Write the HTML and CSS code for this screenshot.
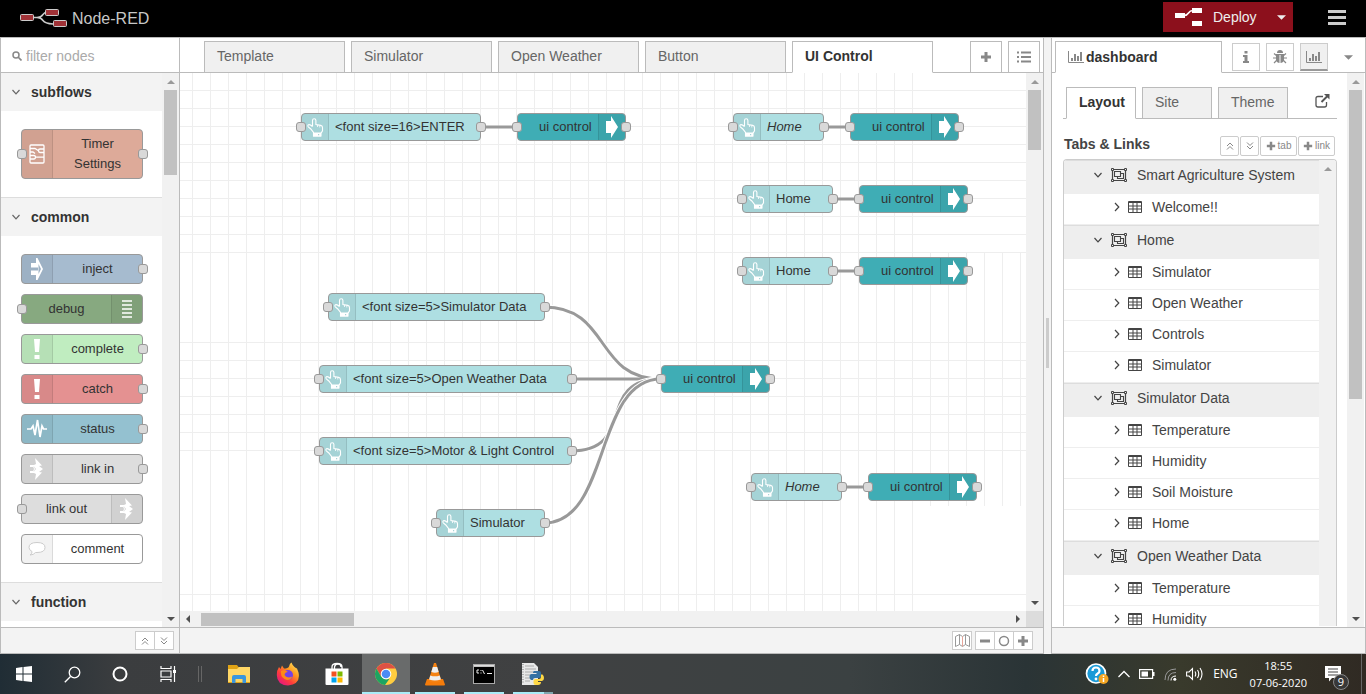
FILE: index.html
```html
<!DOCTYPE html>
<html lang="en">
<head>
<meta charset="utf-8">
<title>Node-RED</title>
<link rel="stylesheet" href="styles.css">
</head>
<body>
<svg class="defs" width="0" height="0" aria-hidden="true">
  <symbol id="i-hand" viewBox="0 0 17 19"><path d="M5.500 8.500V2.500q0-1.800 1.700-1.800T8.900 2.500V6.500l4.800.9q1.900.4 1.800 2.400v3l-1.600 2.700V18H6.500v-3.500L3.800 11 1.300 8.800Q.3 7.500 1.500 6.700q1.500-.6 4 1.800" fill="none" stroke="#fff" stroke-width="1.100"/><path d="M6 14.500h8.200v4H6z" fill="#fff"/><path d="M11 16h1.200v1.200H11z" fill="#a7d4d7"/><path d="M10.500 7v2M12.800 7.500v2" stroke="#fff" stroke-width=".8"/></symbol>
  <symbol id="i-arrow" viewBox="0 0 12 22"><path d="M0 5h5V0L12 11 5 22v-5H0z" fill="#fff"/></symbol>
  <symbol id="i-down" viewBox="0 0 10 10"><path d="M1.500 3 5 6.800 8.500 3" fill="none" stroke="currentColor" stroke-width="1.200"/></symbol>
  <symbol id="i-right" viewBox="0 0 10 10"><path d="M3 1 6.800 5 3 9" fill="none" stroke="currentColor" stroke-width="1.200"/></symbol>
  <symbol id="i-up2" viewBox="0 0 10 10"><path d="M2 5l3-3 3 3M2 8.500l3-3 3 3" fill="none" stroke="currentColor"/></symbol>
  <symbol id="i-down2" viewBox="0 0 10 10"><path d="M2 1.500l3 3 3-3M2 5l3 3 3-3" fill="none" stroke="currentColor"/></symbol>
  <symbol id="i-plus" viewBox="0 0 12 12"><path d="M6 1v10M1 6h10" stroke="currentColor" stroke-width="3"/></symbol>
  <symbol id="i-group" viewBox="0 0 16 14"><g fill="none" stroke="currentColor"><path d="M1.500 1.500h13v11h-13z" stroke-width="1.200"/><path d="M3.500 3.500h6v5h-6zM9.500 5.500h3v5H6.500v-2" stroke-width="1.100"/></g><g fill="#eee" stroke="currentColor"><path d="M.5.500h2v2h-2zM13.500.500h2v2h-2zM.5 11.500h2v2h-2zM13.500 11.500h2v2h-2z"/></g></symbol>
  <symbol id="i-table" viewBox="0 0 14 12"><path d="M1 0h12q1 0 1 1v10q0 1-1 1H1q-1 0-1-1V1q0-1 1-1z" fill="#444"/><path d="M1 2h3.500v2.500H1zM5.500 2h3v2.500h-3zM9.500 2H13v2.500H9.500zM1 5.500h3.500v2H1zM5.500 5.500h3v2h-3zM9.500 5.500H13v2H9.500zM1 8.500h3.500V11H1zM5.500 8.500h3V11h-3zM9.500 8.500H13V11H9.500z" fill="#fff"/></symbol>
  <symbol id="i-chart" viewBox="0 0 16 12"><path d="M.5 0v11.500H16" fill="none" stroke="currentColor"/><path d="M3 7h2v3H3zM6 3h2v7H6zM9 5h2v5H9zM12 1h2v9h-2z" fill="currentColor"/></symbol>
  <symbol id="i-caret-up" viewBox="0 0 8 4"><path d="M0 4 4 0l4 4z" fill="currentColor"/></symbol>
  <symbol id="i-caret-down" viewBox="0 0 8 4"><path d="M0 0h8L4 4z" fill="currentColor"/></symbol>
  <symbol id="i-bang" viewBox="0 0 8 22"><path d="M1 1h6l-1 13H2zM1.500 17h5v4h-5z" fill="#fff"/></symbol>
  <symbol id="i-link" viewBox="0 0 14 22"><path d="M5 0l7 7.500-3 .5 4 3-4 3 3 .5L5 22l1-6-2-1H0v-1.500h4L6 11 4 8.500H0V7h4l2-1z" fill="#fff"/><path d="M0 8.500h3.500q2 2.500 0 5H0" fill="none" stroke="#fff"/></symbol>
</svg>

<header class="topbar">
  <div class="brand">
    <svg width="47" height="19" viewBox="0 0 47 19"><path d="M13 8.500h4q4 0 6-3t5-2M13 8.500h4q4 0 6 3t10 3.500" fill="none" stroke="#ccc" stroke-width="1.500"/><g fill="#a03237" stroke="#ccc"><rect x=".5" y="5.500" width="13" height="6" rx="1"/><rect x="25.500" y=".5" width="13" height="6" rx="1"/><rect x="33.500" y="11.500" width="13" height="6" rx="1"/></g></svg>
    <span>Node-RED</span>
  </div>
  <div class="topbar-actions">
    <button class="deploy"><svg width="28" height="18" viewBox="0 0 28 18"><path d="M0 5h10v5H0zM17 0h10v5H17zM17 13h10v5H17z" fill="#fff"/><path d="M9 7.500q3 0 4.500-2.500T18 2.500" fill="none" stroke="#fff" stroke-width="1.500"/></svg><span>Deploy</span><svg class="deploy-caret" width="9" height="5"><use href="#i-caret-down"/></svg></button>
    <button class="menu" aria-label="Menu"><svg width="18" height="15"><path d="M0 1.500h18M0 7.500h18M0 13.500h18" stroke="#ccc" stroke-width="3"/></svg></button>
  </div>
</header>

<main class="editor">
  <aside class="palette">
    <label class="search"><svg width="10" height="10" viewBox="0 0 10 10"><circle cx="4" cy="4" r="3" fill="none" stroke="#888" stroke-width="1.500"/><path d="M6 6l3.500 3.500" stroke="#888" stroke-width="1.700"/></svg><input type="text" placeholder="filter nodes" aria-label="filter nodes"></label>
    <div class="pane">
      <div class="categories">
        <section>
          <h2><svg width="10" height="10"><use href="#i-down"/></svg>subflows</h2>
          <div class="nodes">
            <div class="pnode subflow both"><i class="port in"></i><b class="ic"><svg width="16" height="20" viewBox="0 0 16 20"><g fill="none" stroke="#fff" stroke-width="1.300"><rect x="1" y="1" width="14" height="18" rx="1"/><path d="M15 5h-4q-1.500 0-1.500 1.700T11 8.500h4M1 11.500h4q1.500 0 1.500 1.700T5 15H1M1 4.500h5l3.500 2.200M6.500 13.200H15M1 8h3l2 1.500"/></g></svg></b><span>Timer<br>Settings</span><i class="port out"></i></div>
          </div>
        </section>
        <section>
          <h2><svg width="10" height="10"><use href="#i-down"/></svg>common</h2>
          <div class="nodes">
            <div class="pnode inject"><b class="ic"><svg width="14" height="22" viewBox="0 0 14 22"><path d="M1 5h5V0h1.500L13 11 7.500 22H6v-5H1v-4.500h7v-3H1z" fill="#fff"/><path d="M8.500 6l2.500 5-2.500 5z" fill="#9db1c4"/></svg></b><span>inject</span><i class="port out"></i></div>
            <div class="pnode debug"><i class="port in"></i><span>debug</span><b class="ic r"><svg width="10" height="18"><path d="M0 1h10M0 5h10M0 9h10M0 13h10M0 17h10" stroke="#fff" stroke-width="1.500"/></svg></b></div>
            <div class="pnode complete"><b class="ic"><svg width="8" height="22"><use href="#i-bang"/></svg></b><span>complete</span><i class="port out"></i></div>
            <div class="pnode catch"><b class="ic"><svg width="8" height="22"><use href="#i-bang"/></svg></b><span>catch</span><i class="port out"></i></div>
            <div class="pnode status"><b class="ic"><svg width="20" height="24" viewBox="0 0 20 24"><path d="M0 12h4l2-3 2 9 2.500-15L13 20l2-11 1.500 3H20" fill="none" stroke="#fff" stroke-width="1.700"/></svg></b><span>status</span><i class="port out"></i></div>
            <div class="pnode link"><b class="ic"><svg width="14" height="22"><use href="#i-link"/></svg></b><span>link in</span><i class="port out"></i></div>
            <div class="pnode link"><i class="port in"></i><span>link out</span><b class="ic r"><svg width="14" height="22"><use href="#i-link"/></svg></b></div>
            <div class="pnode comment"><b class="ic"><svg width="18" height="16" viewBox="0 0 18 16"><path d="M4 10.500Q1 9 1 6.500 1 1.500 9 1.500t8 5q0 5-8 5H7.500Q5.500 14 2 14q2.500-1.500 2-3.500z" fill="#fff" stroke="#ccc"/></svg></b><span>comment</span></div>
          </div>
        </section>
        <section>
          <h2><svg width="10" height="10"><use href="#i-down"/></svg>function</h2>
        </section>
      </div>
      <div class="vbar"><svg class="dim" width="8" height="4"><use href="#i-caret-up"/></svg><div class="thumb t-palette"></div><svg class="end" width="8" height="4"><use href="#i-caret-down"/></svg></div>
    </div>
    <footer class="foot foot-palette"><div class="btns"><button aria-label="Collapse all"><svg width="10" height="10"><use href="#i-up2"/></svg></button><button aria-label="Expand all"><svg width="10" height="10"><use href="#i-down2"/></svg></button></div></footer>
  </aside>

  <section class="workspace">
    <nav class="tabs">
      <a class="tab" href="#">Template</a><a class="tab" href="#">Simulator</a><a class="tab" href="#">Open Weather</a><a class="tab" href="#">Button</a><a class="tab on" href="#">UI Control</a>
      <div class="tab-tools"><button aria-label="Add flow"><svg width="12" height="12"><use href="#i-plus"/></svg></button><button aria-label="List flows"><svg width="14" height="12"><path d="M0 1.500h2M0 6h2M0 10.500h2M4 1.500h10M4 6h10M4 10.500h10" stroke="#888" stroke-width="2"/></svg></button></div>
    </nav>
    <div class="pane">
      <div class="canvas-col">
        <div class="canvas">
          <svg class="wires">
            <defs>
              <pattern id="gv" x="12" width="18" height="18" patternUnits="userSpaceOnUse"><rect width="1" height="18" fill="#eee"/></pattern>
              <pattern id="gh" y="17" width="18" height="18" patternUnits="userSpaceOnUse"><rect width="18" height="1" fill="#eee"/></pattern>
            </defs>
            <rect width="733" height="100%" fill="url(#gv)"/>
            <rect x="733" y="180" width="112" height="253" fill="url(#gv)"/>
            <rect width="100%" height="180" fill="url(#gh)"/>
            <rect y="269" width="100%" height="109" fill="url(#gh)"/>
            <rect y="521" width="100%" height="1" fill="#eee"/>
            <g fill="none">
              <path class="halo" d="M364 234C431 234 414 306 481 306"/><path class="wire" d="M364 234C431 234 414 306 481 306"/>
              <path class="wire" d="M391 306H481"/>
              <path class="halo" d="M391 378C458 378 414 306 481 306"/><path class="wire" d="M391 378C458 378 414 306 481 306"/>
              <path class="halo" d="M364 450C431 450 414 306 481 306"/><path class="wire" d="M364 450C431 450 414 306 481 306"/>
              <path class="wire" d="M301 54H337M643 54H670M652 126H679M652 198H679M661 414H688"/>
            </g>
          </svg>
          <div class="node btn enter"><i class="port in"></i><b class="ic"><svg width="17" height="19"><use href="#i-hand"/></svg></b><span>&lt;font size=16&gt;ENTER</span><i class="port out"></i></div>
          <div class="node ctl enter-ctl"><i class="port in"></i><span>ui control</span><b class="ic r"><svg width="12" height="22"><use href="#i-arrow"/></svg></b><i class="port out"></i></div>
          <div class="node btn home1"><i class="port in"></i><b class="ic"><svg width="17" height="19"><use href="#i-hand"/></svg></b><span><em>Home</em></span><i class="port out"></i></div>
          <div class="node ctl home1-ctl"><i class="port in"></i><span>ui control</span><b class="ic r"><svg width="12" height="22"><use href="#i-arrow"/></svg></b><i class="port out"></i></div>
          <div class="node btn home2"><i class="port in"></i><b class="ic"><svg width="17" height="19"><use href="#i-hand"/></svg></b><span>Home</span><i class="port out"></i></div>
          <div class="node ctl home2-ctl"><i class="port in"></i><span>ui control</span><b class="ic r"><svg width="12" height="22"><use href="#i-arrow"/></svg></b><i class="port out"></i></div>
          <div class="node btn home3"><i class="port in"></i><b class="ic"><svg width="17" height="19"><use href="#i-hand"/></svg></b><span>Home</span><i class="port out"></i></div>
          <div class="node ctl home3-ctl"><i class="port in"></i><span>ui control</span><b class="ic r"><svg width="12" height="22"><use href="#i-arrow"/></svg></b><i class="port out"></i></div>
          <div class="node btn simdata"><i class="port in"></i><b class="ic"><svg width="17" height="19"><use href="#i-hand"/></svg></b><span>&lt;font size=5&gt;Simulator Data</span><i class="port out"></i></div>
          <div class="node btn weather"><i class="port in"></i><b class="ic"><svg width="17" height="19"><use href="#i-hand"/></svg></b><span>&lt;font size=5&gt;Open Weather Data</span><i class="port out"></i></div>
          <div class="node btn motor"><i class="port in"></i><b class="ic"><svg width="17" height="19"><use href="#i-hand"/></svg></b><span>&lt;font size=5&gt;Motor &amp; Light Control</span><i class="port out"></i></div>
          <div class="node btn simulator"><i class="port in"></i><b class="ic"><svg width="17" height="19"><use href="#i-hand"/></svg></b><span>Simulator</span><i class="port out"></i></div>
          <div class="node ctl main-ctl"><i class="port in"></i><span>ui control</span><b class="ic r"><svg width="12" height="22"><use href="#i-arrow"/></svg></b><i class="port out"></i></div>
          <div class="node btn home4"><i class="port in"></i><b class="ic"><svg width="17" height="19"><use href="#i-hand"/></svg></b><span><em>Home</em></span><i class="port out"></i></div>
          <div class="node ctl home4-ctl"><i class="port in"></i><span>ui control</span><b class="ic r"><svg width="12" height="22"><use href="#i-arrow"/></svg></b><i class="port out"></i></div>
        </div>
        <div class="hbar"><svg width="4" height="8"><path d="M4 0v8L0 4z" fill="#505050"/></svg><div class="hthumb"></div><svg class="hend" width="4" height="8"><path d="M0 0v8l4-4z" fill="#505050"/></svg></div>
      </div>
      <div class="vcol">
        <div class="vbar"><svg class="dim" width="8" height="4"><use href="#i-caret-up"/></svg><div class="thumb t-canvas"></div><svg class="end" width="8" height="4"><use href="#i-caret-down"/></svg></div>
        <div class="corner"></div>
      </div>
    </div>
    <footer class="foot">
      <div class="btns"><button aria-label="Toggle navigator"><svg width="15" height="13" viewBox="0 0 15 13"><path d="M.5 2.500 4.500.500l3 2 3-2 4 2v10l-4-2-3 2-3-2-4 2zM4.500.500v10M10.500.500v10" fill="none" stroke="#999"/><path d="M7.500 2.500v10" stroke="#e8a59a"/></svg></button></div>
      <div class="btns"><button aria-label="Zoom out"><svg width="12" height="12"><path d="M1 6h10" stroke="#888" stroke-width="3"/></svg></button><button aria-label="Reset zoom"><svg width="12" height="12"><circle cx="6" cy="6" r="4.500" fill="none" stroke="#888" stroke-width="1.500"/></svg></button><button aria-label="Zoom in"><svg width="12" height="12"><use href="#i-plus"/></svg></button></div>
    </footer>
  </section>

  <div class="splitter"><div class="grip"></div></div>

  <aside class="sidebar">
    <nav class="tabs side-tabs">
      <a class="tab on" href="#"><svg width="16" height="12"><use href="#i-chart"/></svg>dashboard</a>
      <div class="side-tools">
        <button aria-label="Info"><svg width="6" height="12" viewBox="0 0 6 12"><path d="M1.500 0h3v2.500h-3zM0 4h4.500v6H6v2H0v-2h1.500V6H0z" fill="#888"/></svg></button>
        <button aria-label="Debug"><svg width="14" height="14" viewBox="0 0 14 14"><g fill="#888"><path d="M4 3q0-3 3-3t3 3z"/><path d="M3 4h8v5q0 4-4 4T3 9z"/></g><path d="M1 3.500 4 6M13 3.500 10 6M0 8h14M1 13l3-3M13 13l-3-3" stroke="#888" stroke-width="1.200"/><path d="M7 5v8" stroke="#fff"/></svg></button>
        <button class="sel" aria-label="Dashboard"><svg width="16" height="12"><use href="#i-chart"/></svg></button>
        <button class="plain" aria-label="More"><svg width="9" height="5"><use href="#i-caret-down"/></svg></button>
      </div>
    </nav>
    <div class="pane side-pane">
      <div class="side-body">
        <nav class="subtabs"><a class="tab on" href="#">Layout</a><a class="tab" href="#">Site</a><a class="tab" href="#">Theme</a><a class="ext" href="#" aria-label="Open dashboard"><svg width="15" height="14" viewBox="0 0 15 14"><path d="M8 2.500H3q-2 0-2 2V11q0 2 2 2h6.500q2 0 2-2V8" fill="none" stroke="#555" stroke-width="1.300"/><path d="M9 0h5.500v5.500z" fill="#555"/><path d="M6.500 8 13 1.500" stroke="#555" stroke-width="2"/></svg></a></nav>
        <div class="list-head"><h3>Tabs &amp; Links</h3><div class="mini"><button aria-label="Collapse"><svg width="10" height="10"><use href="#i-up2"/></svg></button><button aria-label="Expand"><svg width="10" height="10"><use href="#i-down2"/></svg></button><button class="wide"><svg width="10" height="10"><use href="#i-plus"/></svg>tab</button><button class="wide"><svg width="10" height="10"><use href="#i-plus"/></svg>link</button></div></div>
        <div class="tree">
          <ul>
            <li class="head"><svg width="10" height="10"><use href="#i-down"/></svg><svg width="16" height="14"><use href="#i-group"/></svg>Smart Agriculture System</li>
            <li><svg width="10" height="10"><use href="#i-right"/></svg><svg width="14" height="12"><use href="#i-table"/></svg>Welcome!!</li>
            <li class="head"><svg width="10" height="10"><use href="#i-down"/></svg><svg width="16" height="14"><use href="#i-group"/></svg>Home</li>
            <li><svg width="10" height="10"><use href="#i-right"/></svg><svg width="14" height="12"><use href="#i-table"/></svg>Simulator</li>
            <li><svg width="10" height="10"><use href="#i-right"/></svg><svg width="14" height="12"><use href="#i-table"/></svg>Open Weather</li>
            <li><svg width="10" height="10"><use href="#i-right"/></svg><svg width="14" height="12"><use href="#i-table"/></svg>Controls</li>
            <li><svg width="10" height="10"><use href="#i-right"/></svg><svg width="14" height="12"><use href="#i-table"/></svg>Simulator</li>
            <li class="head"><svg width="10" height="10"><use href="#i-down"/></svg><svg width="16" height="14"><use href="#i-group"/></svg>Simulator Data</li>
            <li><svg width="10" height="10"><use href="#i-right"/></svg><svg width="14" height="12"><use href="#i-table"/></svg>Temperature</li>
            <li><svg width="10" height="10"><use href="#i-right"/></svg><svg width="14" height="12"><use href="#i-table"/></svg>Humidity</li>
            <li><svg width="10" height="10"><use href="#i-right"/></svg><svg width="14" height="12"><use href="#i-table"/></svg>Soil Moisture</li>
            <li><svg width="10" height="10"><use href="#i-right"/></svg><svg width="14" height="12"><use href="#i-table"/></svg>Home</li>
            <li class="head"><svg width="10" height="10"><use href="#i-down"/></svg><svg width="16" height="14"><use href="#i-group"/></svg>Open Weather Data</li>
            <li><svg width="10" height="10"><use href="#i-right"/></svg><svg width="14" height="12"><use href="#i-table"/></svg>Temperature</li>
            <li><svg width="10" height="10"><use href="#i-right"/></svg><svg width="14" height="12"><use href="#i-table"/></svg>Humidity</li>
          </ul>
          <div class="vbar"><svg class="dim" width="8" height="4"><use href="#i-caret-up"/></svg></div>
        </div>
      </div>
      <div class="vbar"><svg class="dim" width="8" height="4"><use href="#i-caret-up"/></svg><div class="thumb t-side"></div><svg class="end" width="8" height="4"><use href="#i-caret-down"/></svg></div>
    </div>
    <footer class="foot"></footer>
  </aside>
</main>

<footer class="taskbar">
  <div class="sys">
    <button aria-label="Start"><svg width="16" height="16"><path d="M0 2l6.500-1v6.500H0zM7.500 1 16 0v7.500H7.500zM0 8.500h6.500V15L0 14zM7.500 8.500H16V16l-8.500-1z" fill="#fff"/></svg></button>
    <button aria-label="Search"><svg width="17" height="17"><circle cx="10.500" cy="6.500" r="5.300" fill="none" stroke="#fff" stroke-width="1.300"/><path d="M6.500 10.500.800 16.200" stroke="#fff" stroke-width="1.300"/></svg></button>
    <button aria-label="Cortana"><svg width="16" height="16"><circle cx="8" cy="8" r="6.500" fill="none" stroke="#fff" stroke-width="2"/></svg></button>
    <button aria-label="Task view"><svg width="16" height="16"><path d="M1 0v2.500h10V0M1 16v-2.500h10V16M1 5h10v6H1zM14.500 0v16" fill="none" stroke="#fff" stroke-width="1.200"/><path d="M13 4h3v3h-3z" fill="#fff"/></svg></button>
  </div>
  <div class="sep"></div>
  <div class="apps">
    <button aria-label="File Explorer"><svg width="22" height="19" viewBox="0 0 22 19"><path d="M0 0h9l1.500 2H22v16H0z" fill="#e0a315"/><path d="M0 4h9l2-2h11v15H0z" fill="#ffd766"/><path d="M4 18v-6q0-2 2-2h10q2 0 2 2v6h-3.500v-4h-7v4z" fill="#3a96dd"/></svg></button>
    <button aria-label="Firefox"><svg width="24" height="24" viewBox="0 0 24 24"><defs><linearGradient id="fx" x1="1" y1="0" x2=".2" y2="1"><stop offset="0" stop-color="#fff36b"/><stop offset=".4" stop-color="#ff9a1f"/><stop offset=".7" stop-color="#ff3b3b"/><stop offset="1" stop-color="#e31587"/></linearGradient></defs><path d="M12 23.500Q1 23 .8 13q0-5 2.200-8l1.500 2L6 3.500 8 6.500Q12 6.500 13 4.500 13.500 1.500 15.500.500q.5 2 3 4.500 1.500 1 2.500 1.500l1.500 4Q25 22 12 23.500z" fill="url(#fx)"/><circle cx="12" cy="13" r="5" fill="#7542e5"/><path d="M5 9q4-2 7 1-3 0-3.500 3 2 4 8 1.500Q13 20 8.500 17 4 14 5 9z" fill="#ff8a16"/></svg></button>
    <button aria-label="Microsoft Store"><svg width="24" height="24" viewBox="0 0 24 24"><path d="M7 7V5q0-3.500 5-3.500t5 3.500v2M9.500 7V5Q10 2 13 2t3 3" fill="none" stroke="#fff" stroke-width="1.300"/><path d="M.5 6.500h23V22q0 1-1 1h-21q-1 0-1-1z" fill="#fff"/><path d="M6.500 9.500h5v5h-5z" fill="#f25022"/><path d="M12.500 9.500h5v5h-5z" fill="#7fba00"/><path d="M6.500 15.500h5v5h-5z" fill="#00a4ef"/><path d="M12.500 15.500h5v5h-5z" fill="#ffb900"/></svg></button>
    <button class="running active" aria-label="Chrome"><svg width="24" height="24" viewBox="0 0 24 24"><circle cx="12" cy="12" r="11" fill="#ffcd40"/><path d="M2.500 6.500A11 11 0 0 1 21.500 6.500H12L7.200 14.800z" fill="#dd5144"/><path d="M2.500 6.500 7.200 14.800 12 17.500l3.500-.8L11 23A11 11 0 0 1 2.500 6.500z" fill="#1da462"/><circle cx="12" cy="12" r="5.300" fill="#fff"/><circle cx="12" cy="12" r="4.300" fill="#4c8bf5"/></svg></button>
    <button class="running" aria-label="VLC"><svg width="22" height="24" viewBox="0 0 22 24"><path d="M3 17h16l2 5.500q0 1-1 1H2q-1 0-1-1z" fill="#f57c0b"/><path d="M10 1h2l5.500 18q-6.500 3-13 0z" fill="#f58212"/><path d="M8.800 5h4.400l1.500 5q-3.700 1.500-7.400 0zM6.300 13.500q4.700 1.700 9.400 0l1.200 4q-6 2-11.800 0z" fill="#eee"/></svg></button>
    <button class="running" aria-label="Command Prompt"><svg width="22" height="20" viewBox="0 0 22 20"><path d="M0 0h22v20H0z" fill="#aaa"/><path d="M1 3h20v16H1z" fill="#000"/><path d="M1 1h20v1.500H1z" fill="#ddd"/><path d="M6 6H4v3h2M8 6v1M8 8.500v1M9.500 6l2 4M14 9.500h5" fill="none" stroke="#eee"/></svg></button>
    <button class="running multi" aria-label="Python"><svg width="24" height="24" viewBox="0 0 24 24"><path d="M1 1h12l4 4v18H1z" fill="#e8e8e8"/><path d="M4 4h9M4 7h11M4 10h8M4 13h5M4 16h5M4 19h5" stroke="#aaa"/><path d="M2 2v20" stroke="#777" stroke-dasharray="1 1.500"/><path d="M13 9h5q2 0 2 2v3q0 2-2 2h-4q-2 0-2 2h-2q-1.500-1-1.500-3 0-3 2-3h5v-1H12q0-2 1-2z" fill="#3571a3"/><path d="M20 12.500h1.500q1.500 1 1.500 3.500t-2 3h-4v1h3q0 3-3 3h-2q-2.500 0-2.500-2v-2q0-2 2-2H18q2 0 2-2z" fill="#ffd845"/></svg></button>
  </div>
  <div class="tray">
    <svg width="24" height="22" viewBox="0 0 24 22"><circle cx="11" cy="10.500" r="9.500" fill="#1a9ad7" stroke="#fff" stroke-width="1.700"/><path d="M7.500 8q0-3.500 3.500-3.500T14.500 8q0 1.500-1.800 2.500T11 13" fill="none" stroke="#fff" stroke-width="2.200"/><circle cx="11" cy="16" r="1.400" fill="#fff"/><circle cx="18.500" cy="16" r="5" fill="#f5a623"/><path d="M18.500 15v4M18.500 12.500v1.500" stroke="#fff" stroke-width="1.500"/></svg>
    <svg width="12" height="8"><path d="M.500 7 6 1.500 11.500 7" fill="none" stroke="#fff" stroke-width="1.300"/></svg>
    <svg width="16" height="10"><path d="M.600.600h13v8.800H.600z" fill="none" stroke="#fff" stroke-width="1.200"/><path d="M2.500 2.500H9v5H2.500zM14 3h1.500v4H14z" fill="#fff"/></svg>
    <svg width="13" height="13" viewBox="0 0 13 13"><path d="M1 12Q1 1 12 1M4 12.500Q4 4.500 12 4.500" fill="none" stroke="#999"/><path d="M7 12.500Q7 8 12 8" fill="none" stroke="#fff"/><circle cx="10.800" cy="11.300" r="1.500" fill="#fff"/></svg>
    <svg width="18" height="14" viewBox="0 0 18 14"><path d="M.6 5h2.500L6.500 1.500v11L3.100 9H.6zM9 4.500q1.500 2.500 0 5M11.500 3q2.500 4 0 8M14 1q4 6 0 12" fill="none" stroke="#fff" stroke-width="1.100"/></svg>
    <span class="lang">ENG</span>
    <time class="clock" datetime="2020-06-07T18:55">18:55<br>07-06-2020</time>
    <svg class="notif" width="26" height="26" viewBox="0 0 26 26"><path d="M1 2h16v12H8l-3 3.500V14H1z" fill="#fff"/><path d="M4 5h10M4 8h10M4 11h10" stroke="#444"/><circle cx="17" cy="18" r="7.500" fill="#383838" stroke="#888"/><text x="17" y="22" text-anchor="middle">9</text></svg>
  </div>
</footer>
</body>
</html>
```

FILE: styles.css
```css
* { box-sizing: border-box; }
body { margin: 0; height: 100vh; display: flex; flex-direction: column; overflow: hidden; font: 14px/20px "Liberation Sans", Arial, sans-serif; color: #444; background: #f3f3f3; }
svg { display: block; flex: none; }
.defs { position: absolute; }
button { font: inherit; color: #888; margin: 0; padding: 0; border: 0; background: none; display: flex; align-items: center; justify-content: center; }
a { color: inherit; text-decoration: none; }
h2, h3, ul { margin: 0; padding: 0; font-size: 14px; }

/* top bar */
.topbar { flex: none; height: 37px; background: #000; display: flex; justify-content: space-between; align-items: flex-start; padding: 0 20px; }
.brand { display: flex; align-items: center; gap: 5px; height: 37px; color: #c7c7c7; font-size: 16px; }
.topbar-actions { display: flex; align-items: center; gap: 35px; padding-top: 2px; }
.deploy { background: #8c101c; color: #eee; height: 30px; width: 130px; justify-content: flex-start; padding-left: 12px; }
.deploy span { padding: 0 20px 0 10px; }
.deploy-caret { color: #eee; }

/* editor columns */
.editor { flex: 1; min-height: 0; display: flex; border-top: 1px solid #bbb; }
.palette, .workspace, .sidebar { display: flex; flex-direction: column; background: #fff; min-height: 0; border-right: 1px solid #bbb; }
.palette { flex: none; width: 180px; border-left: 1px solid #bbb; }
.workspace { flex: 1; min-width: 0; }
.sidebar { flex: none; width: 315px; border-left: 1px solid #bbb; }
.splitter { flex: none; width: 7px; display: flex; align-items: center; justify-content: center; padding-bottom: 6px; }
.grip { width: 3px; height: 50px; background: #ccc; }
.pane { flex: 1; min-height: 0; display: flex; }
.side-pane { padding-right: 1px; }
.foot { flex: none; height: 27px; background: #f3f3f3; border-top: 1px solid #bbb; border-bottom: 1px solid #bbb; display: flex; justify-content: flex-end; align-items: center; gap: 3px; padding-right: 10px; }
.foot-palette { padding-right: 5px; }
.btns { display: flex; }
.btns button { width: 20px; height: 19px; background: #fff; border: 1px solid #ccc; }
.btns button + button { margin-left: -1px; }

/* scroll bars */
.vbar { flex: none; width: 17px; background: #f1f1f1; display: flex; flex-direction: column; align-items: center; padding: 7px 0 6px; gap: 6px; color: #505050; }
.dim { color: #999; }
.thumb { width: 13px; background: #c1c1c1; }
.t-palette { height: 85px; }
.t-canvas { height: 60px; }
.t-side { height: 309px; }
.end { margin-top: auto; }
.hbar { flex: none; height: 16px; background: #f1f1f1; display: flex; align-items: center; gap: 11px; padding: 0 6px; }
.hthumb { width: 153px; height: 13px; background: #c1c1c1; }
.hend { margin-left: auto; }
.vcol { flex: none; display: flex; flex-direction: column; }
.vcol .vbar { flex: 1; }
.corner { height: 16px; background: #dcdcdc; }

/* palette */
.search { flex: none; height: 35px; display: flex; align-items: center; gap: 4px; padding: 2px 11px 0; border-bottom: 1px solid #bbb; }
.search input { min-width: 0; flex: 1; border: 0; padding: 0; outline: 0; background: none; font: inherit; color: #444; }
.search input::placeholder { color: #aaa; }
.categories { flex: 1; min-width: 0; overflow: hidden; }
.categories section + section { border-top: 1px solid #ddd; }
.categories h2 { height: 38px; display: flex; align-items: center; gap: 10px; padding-left: 10px; background: #f3f3f3; color: #333; }
.categories h2 svg { color: #666; }
.nodes { padding: 18px 19px 18px 20px; display: flex; flex-direction: column; gap: 10px; }
.pnode, .node { position: relative; display: flex; align-items: stretch; border: 1px solid #999; border-radius: 4px; font-size: 13px; color: #333; }
.pnode { height: 30px; }
.pnode span { flex: 1; align-self: center; text-align: center; line-height: 20px; }
.ic { flex: none; width: 31px; background: rgba(0,0,0,.05); border-right: 1px solid rgba(0,0,0,.1); display: flex; align-items: center; justify-content: center; border-radius: 3px 0 0 3px; }
.ic.r { border-right: 0; border-left: 1px solid rgba(0,0,0,.1); border-radius: 0 3px 3px 0; }
.port { position: absolute; top: calc(50% - 5px); width: 10px; height: 10px; background: #d9d9d9; border: 1px solid #999; border-radius: 3px; }
.in { left: -5px; }
.out { right: -6px; }
.subflow { height: 50px; background: #da9; }
.inject { background: #a6bbcf; }
.debug { background: #87a980; }
.complete { background: #c0edc0; }
.catch { background: #e49191; }
.status { background: #94c1d0; }
.link { background: #ddd; }
.comment { background: #fff; }

/* tabs */
.tabs, .subtabs { flex: none; display: flex; align-items: flex-end; gap: 6px; box-shadow: inset 0 -1px #bbb; }
.tabs { height: 35px; padding-left: 24px; }
.tab { width: 141px; height: 32px; padding: 0 12px; line-height: 29px; background: #f0f0f0; border: 1px solid #bbb; color: #666; white-space: nowrap; }
.tab.on { background: #fff; border-bottom-color: #fff; color: #333; font-weight: bold; }
.tab-tools { margin-left: auto; display: flex; gap: 6px; padding-right: 3px; }
.tab-tools button { width: 32px; height: 32px; border: 1px solid #bbb; }

/* canvas */
.canvas-col { flex: 1; min-width: 0; display: flex; flex-direction: column; }
.canvas { flex: 1; min-height: 0; position: relative; overflow: hidden; background: #fff; }
.wires { position: absolute; inset: 0; width: 100%; height: 100%; }
.wire { stroke: #999; stroke-width: 3; }
.halo { stroke: #fff; stroke-width: 5; }
.node { position: absolute; height: 28px; }
.node span { flex: 1; align-self: center; line-height: 20px; white-space: nowrap; }
.node .ic { width: 27px; }
.node .in { left: -6px; }
.btn { background: #aedfe2; }
.btn span { padding-left: 6px; }
.ctl { width: 109px; background: #3fadb5; }
.ctl span { padding-left: 21px; }
.enter { left: 121px; top: 40px; width: 180px; }
.enter-ctl { left: 337px; top: 40px; }
.home1 { left: 553px; top: 40px; width: 91px; }
.home1-ctl { left: 670px; top: 40px; }
.home2 { left: 562px; top: 112px; width: 91px; }
.home2-ctl { left: 679px; top: 112px; }
.home3 { left: 562px; top: 184px; width: 91px; }
.home3-ctl { left: 679px; top: 184px; }
.simdata { left: 148px; top: 220px; width: 217px; }
.weather { left: 139px; top: 292px; width: 253px; }
.motor { left: 139px; top: 364px; width: 253px; }
.simulator { left: 256px; top: 436px; width: 109px; }
.main-ctl { left: 481px; top: 292px; }
.home4 { left: 571px; top: 400px; width: 91px; }
.home4-ctl { left: 688px; top: 400px; }

/* sidebar */
.side-tabs { padding-left: 3px; }
.side-tabs .tab { width: 167px; display: flex; align-items: center; gap: 2px; }
.side-tabs .tab svg { color: #888; }
.side-tools { display: flex; align-items: center; gap: 6px; margin-left: 4px; padding-bottom: 2px; }
.side-tools button { width: 28px; height: 28px; border: 1px solid #ccc; background: #fff; }
.side-tools .sel { background: #f0f0f0; border-bottom: 2px solid #999; }
.side-tools .plain { border: 0; background: none; }
.side-body { flex: 1; min-width: 0; min-height: 0; display: flex; flex-direction: column; padding: 14px 10px 1px 11px; }
.subtabs { padding-left: 3px; }
.subtabs .tab { width: 70px; }
.ext { margin: 0 7px 11px auto; }
.list-head { display: flex; justify-content: space-between; align-items: center; padding: 12px 2px 3px 1px; height: 40px; }
.mini { display: flex; gap: 1px; padding-top: 4px; }
.mini button { width: 19px; height: 20px; border: 1px solid #ccc; border-radius: 2px; background: #fff; font-size: 10px; }
.mini .wide { width: 37px; gap: 2px; }
.tree { flex: 1; min-height: 0; display: flex; overflow: hidden; border: 1px solid #ccc; border-bottom: 0; border-radius: 4px 4px 0 0; }
.tree ul { flex: 1; list-style: none; }
.tree li { height: 31px; display: flex; align-items: center; gap: 10px; padding: 0 0 4px 48px; border-bottom: 1px solid #eee; }
.tree li svg + svg { margin-left: -4px; }
.tree .head { height: 34px; padding: 0 0 6px 29px; background: #eee; border-bottom: 0; border-top: 1px solid #ddd; }
.tree .head svg + svg { margin-left: -2px; }

/* taskbar */
.taskbar { flex: none; height: 40px; display: flex; align-items: stretch; color: #fff; background: linear-gradient(90deg, #202d35, #3b3d3f 120px, #404142 540px, #3b4142 850px, #2a3436 1026px, #393a2c 1180px, #302a23); font-family: "Open Sans", "Noto Sans", sans-serif; }
.sys, .apps { display: flex; }
.sys button { width: 48px; }
.sep { width: 4px; margin: 12px 13px 12px 6px; border: solid #666; border-width: 0 1px; }
.apps { gap: 1px; }
.apps button { width: 48px; position: relative; }
.apps .active { background: #696b6b; }
.running::after { content: ""; position: absolute; left: 4px; right: 4px; bottom: 0; height: 2px; background: #a9ecf8; }
.running.active::after { left: 0; right: 0; }
.running.multi::after { background: linear-gradient(90deg, #a9ecf8 31px, #7fa6ae 31px); }
.tray { margin-left: auto; display: flex; align-items: center; gap: 9px; padding-right: 4px; margin-right: 4px; border-right: 1px solid #666; }
.lang { font-size: 12px; }
.clock { font-size: 11px; line-height: 17px; text-align: center; margin: 0 8px 0 3px; }
.notif { margin-top: 6px; margin-right: 7px; }
.notif text { fill: #fff; font-size: 11px; }
```
